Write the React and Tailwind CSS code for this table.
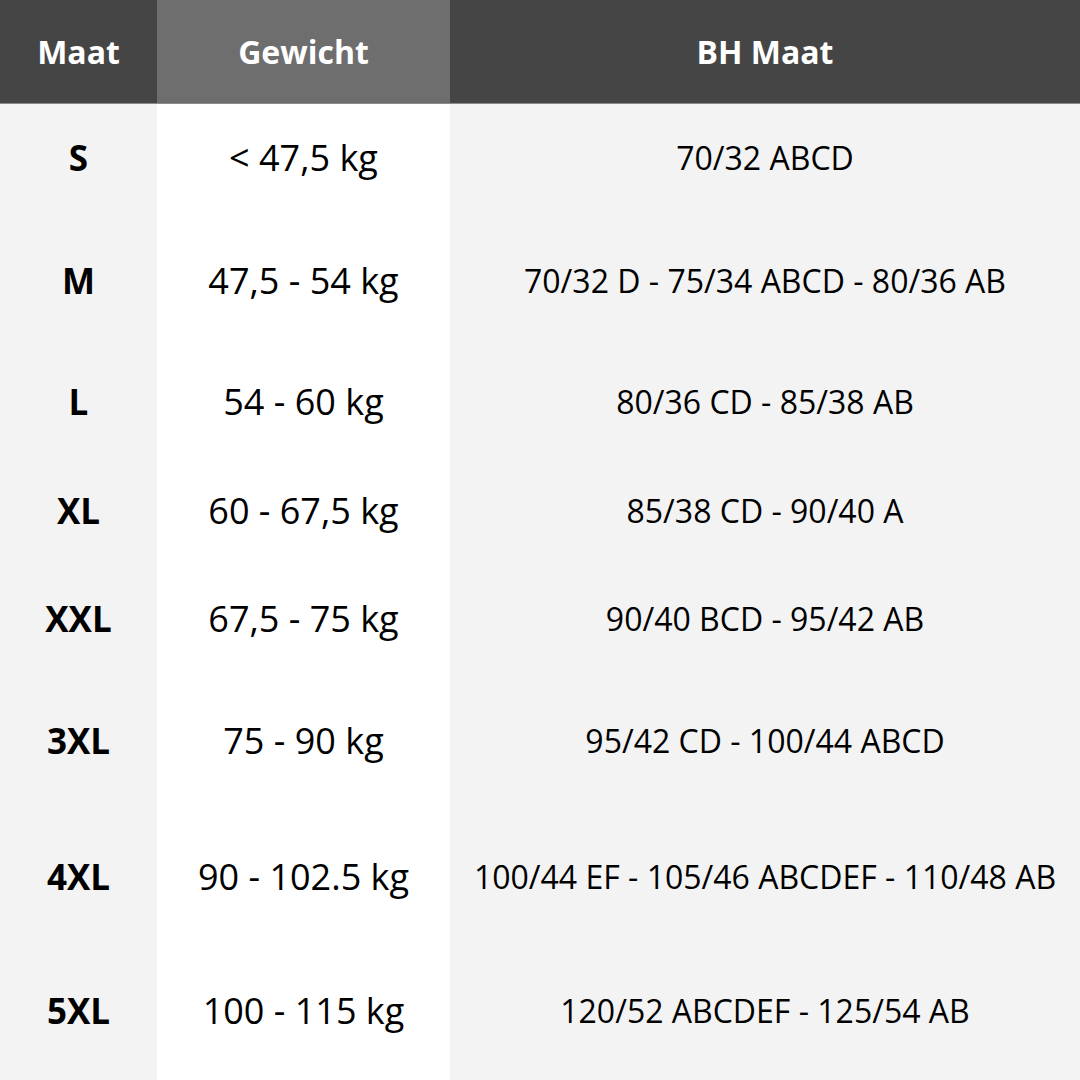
import React from 'react';

const rows = [
  { maat: 'S', gewicht: '< 47,5 kg', bh: '70/32 ABCD', h: 'h-[108px]' },
  { maat: 'M', gewicht: '47,5 - 54 kg', bh: '70/32 D - 75/34 ABCD - 80/36 AB', h: 'h-[138px]' },
  { maat: 'L', gewicht: '54 - 60 kg', bh: '80/36 CD - 85/38 AB', h: 'h-[104px]' },
  { maat: 'XL', gewicht: '60 - 67,5 kg', bh: '85/38 CD - 90/40 A', h: 'h-[114px]' },
  { maat: 'XXL', gewicht: '67,5 - 75 kg', bh: '90/40 BCD - 95/42 AB', h: 'h-[102px]' },
  { maat: '3XL', gewicht: '75 - 90 kg', bh: '95/42 CD - 100/44 ABCD', h: 'h-[142px]' },
  { maat: '4XL', gewicht: '90 - 102.5 kg', bh: '100/44 EF - 105/46 ABCDEF - 110/48 AB', h: 'h-[130px]' },
  { maat: '5XL', gewicht: '100 - 115 kg', bh: '120/52 ABCDEF - 125/54 AB', h: 'h-[138px]' },
];

export default function App() {
  return (
    <div className="w-[1080px] h-[1080px] overflow-hidden bg-[#f3f3f3] text-black font-['Open_Sans',sans-serif]">
      {/* Header */}
      <div className="flex h-[104px] border-b border-[#8a8a8a] text-white font-bold text-[32px]">
        <div className="w-[157px] bg-[#454545] flex items-center justify-center">Maat</div>
        <div className="w-[293px] bg-[#6e6e6e] flex items-center justify-center">Gewicht</div>
        <div className="flex-1 bg-[#454545] flex items-center justify-center">BH Maat</div>
      </div>

      {rows.map((r) => (
        <div key={r.maat} className={`flex ${r.h}`}>
          <div className="w-[157px] bg-[#f3f3f3] flex items-center justify-center font-bold text-[35px]">
            {r.maat}
          </div>
          <div className="w-[293px] bg-white flex items-center justify-center text-[36px]">
            {r.gewicht}
          </div>
          <div className="flex-1 bg-[#f3f3f3] flex items-center justify-center text-[32px] whitespace-nowrap">
            {r.bh}
          </div>
        </div>
      ))}
    </div>
  );
}
